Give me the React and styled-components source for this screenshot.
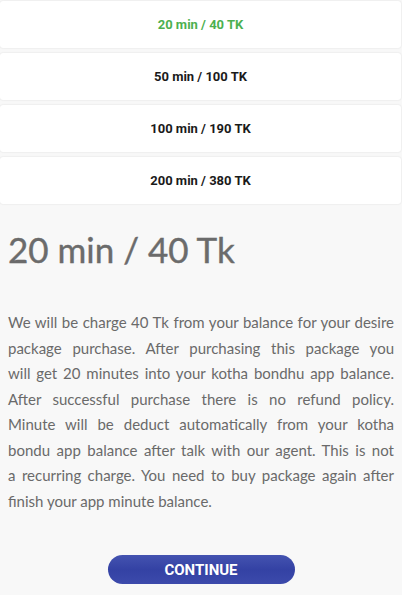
import React from 'react';
import styled, { createGlobalStyle } from 'styled-components';

const GlobalStyle = createGlobalStyle`
  html, body {
    margin: 0;
    padding: 0;
    background: #f8f8f8;
  }
`;

const Page = styled.div`
  width: 402px;
  height: 595px;
  overflow: hidden;
  background: #f8f8f8;
  display: flex;
  flex-direction: column;
`;

const PackageList = styled.div`
  display: flex;
  flex-direction: column;
  gap: 5px;
  padding: 1px 1px 0 0;
`;

const PackageCard = styled.button`
  height: 47px;
  border: none;
  border-radius: 3px;
  background: #ffffff;
  box-shadow: 0 0 2px rgba(0, 0, 0, 0.12);
  font-family: Roboto, 'Liberation Sans', sans-serif;
  font-weight: 700;
  font-size: 13px;
  color: ${props => (props.$active ? '#4cb050' : '#1a1a1a')};
  display: flex;
  align-items: center;
  justify-content: center;
  padding: 0;
`;

const Details = styled.div`
  padding: 0 8px;
  display: flex;
  flex-direction: column;
`;

const Title = styled.h1`
  margin: 23px 0 0;
  font-family: Lato, 'Open Sans', sans-serif;
  font-weight: 400;
  font-size: 35px;
  line-height: 44px;
  color: #6b6b6b;
  -webkit-text-stroke: 0.4px #6b6b6b;
`;

const Description = styled.div`
  margin-top: 39px;
  font-family: Lato, 'Open Sans', sans-serif;
  font-size: 15px;
  line-height: 25.5px;
  color: #6a6a6a;
`;

const Line = styled.span`
  display: block;
  text-align: justify;
  text-align-last: ${props => (props.$last ? 'left' : 'justify')};
`;

const ButtonRow = styled.div`
  display: flex;
  justify-content: center;
  margin-top: 41px;
`;

const ContinueButton = styled.button`
  width: 187px;
  height: 29px;
  border: none;
  border-radius: 15px;
  background: linear-gradient(#4453b0, #3442a4 50%, #3c4aab);
  color: #ffffff;
  font-family: Roboto, 'Liberation Sans', sans-serif;
  font-weight: 700;
  font-size: 15px;
  padding: 0;
`;

const packages = [
  { label: '20 min / 40 TK', active: true },
  { label: '50 min / 100 TK' },
  { label: '100 min / 190 TK' },
  { label: '200 min / 380 TK' },
];

const descriptionLines = [
  'We will be charge 40 Tk from your balance for your desire',
  'package purchase. After purchasing this package you',
  'will get 20 minutes into your kotha bondhu app balance.',
  'After successful purchase there is no refund policy.',
  'Minute will be deduct automatically from your kotha',
  'bondu app balance after talk with our agent. This is not',
  'a recurring charge. You need to buy package again after',
  'finish your app minute balance.',
];

const App = () => (
  <Page>
    <GlobalStyle />
    <PackageList>
      {packages.map(item => (
        <PackageCard key={item.label} $active={item.active}>
          {item.label}
        </PackageCard>
      ))}
    </PackageList>
    <Details>
      <Title>20 min / 40 Tk</Title>
      <Description>
        {descriptionLines.map((line, index) => (
          <Line key={line} $last={index === descriptionLines.length - 1}>
            {line}
          </Line>
        ))}
      </Description>
      <ButtonRow>
        <ContinueButton>CONTINUE</ContinueButton>
      </ButtonRow>
    </Details>
  </Page>
);

export default App;
